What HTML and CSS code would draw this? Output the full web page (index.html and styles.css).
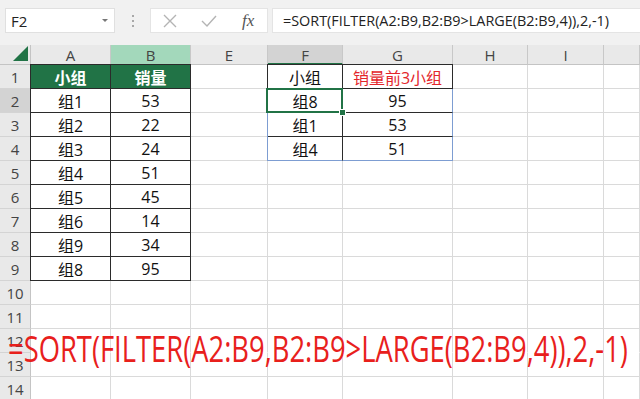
FILE: index.html
```html
<!DOCTYPE html>
<html lang="zh-CN">

<head>
    <meta charset="UTF-8">
    <meta name="viewport" content="width=device-width, initial-scale=1.0">
    <title>SORT FILTER</title>
    <link rel="stylesheet" href="styles.css">
</head>

<body>
    <div class="topbar">
        <div class="namebox">
            <span>F2</span>
            <span class="caret"></span>
        </div>
        <div class="grip"><i></i><i></i><i></i></div>
        <div class="btnbox">
            <svg width="14" height="14" viewBox="0 0 14 14"><path d="M1 1 L13 13 M13 1 L1 13" stroke="#b4b4b4" stroke-width="1.4" fill="none"/></svg>
            <svg width="16" height="14" viewBox="0 0 16 14"><path d="M1 7 L6 12 L15 2" stroke="#b4b4b4" stroke-width="1.4" fill="none"/></svg>
            <span class="fx">fx</span>
        </div>
        <div class="fbox">=SORT(FILTER(A2:B9,B2:B9&gt;LARGE(B2:B9,4)),2,-1)</div>
    </div>

    <div class="sheet">
        <!-- column headers -->
        <div class="corner">
            <svg width="15" height="15" viewBox="0 0 15 15"><polygon points="15,0 15,15 0,15" fill="#217346"/></svg>
        </div>
        <div class="ch">A</div>
        <div class="ch ch-b">B</div>
        <div class="ch">E</div>
        <div class="ch ch-cur">F</div>
        <div class="ch">G</div>
        <div class="ch">H</div>
        <div class="ch">I</div>
        <div class="ch"></div>

        <!-- 1 -->
        <div class="rh">1</div>
        <div class="c hd bk lt">小组</div>
        <div class="c hd bk tp">销量</div>
        <div class="c"></div>
        <div class="c bk lt">小组</div>
        <div class="c bk tp red">销量前3小组</div>
        <div class="c"></div>
        <div class="c"></div>
        <div class="c"></div>

        <!-- 2 -->
        <div class="rh rh-cur">2</div>
        <div class="c bk lf">组1</div>
        <div class="c bk">53</div>
        <div class="c"></div>
        <div class="c bk active">组8</div>
        <div class="c bk br-blue">95</div>
        <div class="c"></div>
        <div class="c"></div>
        <div class="c"></div>

        <!-- 3 -->
        <div class="rh">3</div>
        <div class="c bk lf">组2</div>
        <div class="c bk">22</div>
        <div class="c"></div>
        <div class="c bk lf-blue">组1</div>
        <div class="c bk br-blue">53</div>
        <div class="c"></div>
        <div class="c"></div>
        <div class="c"></div>

        <!-- 4 -->
        <div class="rh">4</div>
        <div class="c bk lf">组3</div>
        <div class="c bk">24</div>
        <div class="c"></div>
        <div class="c bk lf-blue bb-blue">组4</div>
        <div class="c bk br-blue bb-blue">51</div>
        <div class="c"></div>
        <div class="c"></div>
        <div class="c"></div>

        <!-- 5 -->
        <div class="rh">5</div>
        <div class="c bk lf">组4</div>
        <div class="c bk">51</div>
        <div class="c"></div><div class="c"></div><div class="c"></div><div class="c"></div><div class="c"></div><div class="c"></div>

        <!-- 6 -->
        <div class="rh">6</div>
        <div class="c bk lf">组5</div>
        <div class="c bk">45</div>
        <div class="c"></div><div class="c"></div><div class="c"></div><div class="c"></div><div class="c"></div><div class="c"></div>

        <!-- 7 -->
        <div class="rh">7</div>
        <div class="c bk lf">组6</div>
        <div class="c bk">14</div>
        <div class="c"></div><div class="c"></div><div class="c"></div><div class="c"></div><div class="c"></div><div class="c"></div>

        <!-- 8 -->
        <div class="rh">8</div>
        <div class="c bk lf">组9</div>
        <div class="c bk">34</div>
        <div class="c"></div><div class="c"></div><div class="c"></div><div class="c"></div><div class="c"></div><div class="c"></div>

        <!-- 9 -->
        <div class="rh">9</div>
        <div class="c bk lf">组8</div>
        <div class="c bk">95</div>
        <div class="c"></div><div class="c"></div><div class="c"></div><div class="c"></div><div class="c"></div><div class="c"></div>

        <!-- 10 -->
        <div class="rh">10</div>
        <div class="c"></div><div class="c"></div><div class="c"></div><div class="c"></div><div class="c"></div><div class="c"></div><div class="c"></div><div class="c"></div>

        <!-- 11 -->
        <div class="rh">11</div>
        <div class="c"></div><div class="c"></div><div class="c"></div><div class="c"></div><div class="c"></div><div class="c"></div><div class="c"></div><div class="c"></div>

        <!-- 12 -->
        <div class="rh">12</div>
        <div class="c nb"></div><div class="c nb"></div><div class="c nb"></div><div class="c nb"></div><div class="c nb"></div><div class="c nb"></div><div class="c nb"></div><div class="c nb"></div>

        <!-- 13 -->
        <div class="rh">13</div>
        <div class="c"></div><div class="c"></div><div class="c"></div><div class="c"></div><div class="c"></div><div class="c"></div><div class="c"></div><div class="c"></div>

        <!-- 14 -->
        <div class="rh">14</div>
        <div class="c"></div><div class="c"></div><div class="c"></div><div class="c"></div><div class="c"></div><div class="c"></div><div class="c"></div><div class="c"></div>
    </div>

    <div class="caption">=SORT(FILTER(A2:B9,B2:B9&gt;LARGE(B2:B9,4)),2,-1)</div>
</body>

</html>
```

FILE: styles.css
```css
body, html {
    margin: 0;
    padding: 0;
    background-color: #fff;
    font-family: "Open Sans", "Noto Sans CJK SC", sans-serif;
    width: 640px;
    height: 399px;
    overflow: hidden;
}

body {
    position: relative;
}

/* formula bar */
.topbar {
    height: 45px;
    background-color: #f1f1f1;
    display: flex;
    align-items: flex-start;
    padding: 8px 0 0 5px;
    box-sizing: border-box;
}

.namebox {
    width: 110px;
    height: 25px;
    background-color: #fff;
    border: 1px solid #e0e0e0;
    box-sizing: border-box;
    display: flex;
    align-items: center;
    justify-content: space-between;
    padding: 0 6px 0 5px;
    font-size: 15px;
    color: #222;
}

.caret {
    width: 0;
    height: 0;
    border-left: 3px solid transparent;
    border-right: 3px solid transparent;
    border-top: 3px solid #777;
}

.grip {
    width: 35px;
    height: 25px;
    display: flex;
    flex-direction: column;
    align-items: center;
    justify-content: center;
    gap: 3px;
}

.grip i {
    width: 2px;
    height: 2px;
    background-color: #a8a8a8;
}

.btnbox {
    width: 118px;
    height: 25px;
    background-color: #fff;
    border: 1px solid #e4e4e4;
    box-sizing: border-box;
    display: flex;
    align-items: center;
    padding-left: 12px;
    gap: 24px;
}

.fx {
    font-family: "Liberation Serif", serif;
    font-style: italic;
    font-size: 17px;
    color: #555;
    margin-left: 1px;
}

.fbox {
    margin-left: 4px;
    flex: 1;
    height: 25px;
    background-color: #fff;
    border: 1px solid #e4e4e4;
    border-right: none;
    box-sizing: border-box;
    display: flex;
    align-items: center;
    padding-left: 10px;
    font-size: 14.4px;
    color: #222;
}

/* grid */
.sheet {
    display: grid;
    grid-template-columns: 31px 80px 80px 77px 75px 110px 75px 76px 36px;
    grid-template-rows: 20px repeat(14, 24px);
}

.sheet > div {
    box-sizing: border-box;
    display: flex;
    align-items: center;
    justify-content: center;
}

.corner {
    background-color: #e9e9e9;
    border-right: 1px solid #c4c4c4;
    border-bottom: 1px solid #c4c4c4;
    align-items: flex-end !important;
    justify-content: flex-end !important;
    padding: 0 2px 3px 0;
}

.ch {
    background-color: #e9e9e9;
    border-right: 1px solid #c8c8c8;
    border-bottom: 1px solid #c4c4c4;
    font-size: 15px;
    color: #444;
    padding-top: 1px;
}

.ch-b {
    background-color: #a3d8bb;
}

.ch-cur {
    background-color: #d3d3d3;
    border-bottom: 2px solid #217346;
}

.rh {
    background-color: #e9e9e9;
    border-right: 1px solid #c4c4c4;
    border-bottom: 1px solid #d4d4d4;
    font-size: 15px;
    color: #444;
}

.rh-cur {
    background-color: #d3d3d3;
}

.c {
    border-right: 1px solid #dadada;
    border-bottom: 1px solid #dadada;
    font-size: 16px;
    color: #111;
}

.nb {
    border-bottom-color: transparent !important;
}

.hd {
    background-color: #217346;
    color: #fff;
    font-weight: bold;
}

.bk {
    border-right-color: #2b2b2b;
    border-bottom-color: #2b2b2b;
}

.lt {
    box-shadow: -1px 0 0 #2b2b2b, 0 -1px 0 #2b2b2b, -1px -1px 0 #2b2b2b;
}

.tp {
    box-shadow: 0 -1px 0 #2b2b2b;
}

.lf {
    box-shadow: -1px 0 0 #2b2b2b;
}

.lf-blue {
    box-shadow: -1px 0 0 #7d9dd2;
}

.br-blue {
    border-right-color: #7d9dd2;
}

.bb-blue {
    border-bottom-color: #7d9dd2;
}

.red {
    color: #e3262b;
}

.active {
    position: relative;
}

.active::after {
    content: "";
    position: absolute;
    left: -2px;
    top: -1px;
    right: -1px;
    bottom: -1px;
    border: 2px solid #217346;
}

.active::before {
    content: "";
    position: absolute;
    right: -4px;
    bottom: -4px;
    width: 5px;
    height: 5px;
    background-color: #217346;
    border: 1px solid #fff;
    z-index: 1;
}

/* pasted caption over the grid */
.caption {
    position: absolute;
    left: 8px;
    top: 331px;
    font-size: 36px;
    line-height: 36px;
    color: #e8201c;
    white-space: nowrap;
    transform: scaleX(0.76);
    transform-origin: left center;
}
```
